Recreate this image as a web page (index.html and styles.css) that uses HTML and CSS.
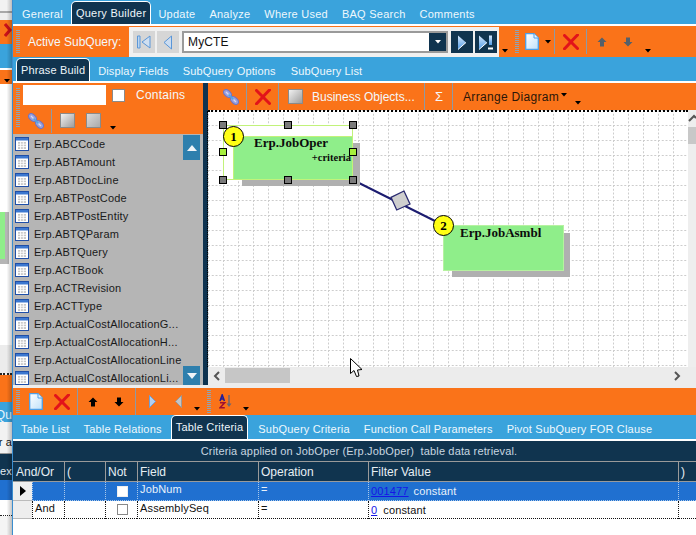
FILE: index.html
```html
<!DOCTYPE html>
<html lang="en">
<head>
<meta charset="utf-8">
<title>Query Builder</title>
<link rel="stylesheet" href="styles.css">
</head>
<body>
<svg class="defs" width="0" height="0" aria-hidden="true">
  <defs>
    <linearGradient id="gsq" x1="0" y1="0" x2="1" y2="1"><stop offset="0" stop-color="#f4f4f4"/><stop offset="1" stop-color="#9a9a9a"/></linearGradient>
    <linearGradient id="gsq2" x1="0" y1="0" x2="1" y2="1"><stop offset="0" stop-color="#dcdcdc"/><stop offset="1" stop-color="#a8a8a8"/></linearGradient>
    <linearGradient id="gdoc" x1="0" y1="0" x2="1" y2="1"><stop offset="0" stop-color="#ffffff"/><stop offset="1" stop-color="#bfe0fa"/></linearGradient>
    <linearGradient id="gtri" x1="0" y1="0" x2="0" y2="1"><stop offset="0" stop-color="#d6e8fb"/><stop offset="1" stop-color="#4f9be8"/></linearGradient>
    <symbol id="i-link" viewBox="0 0 16 16"><ellipse cx="4.500" cy="4.500" rx="4.600" ry="3" transform="rotate(45 4.500 4.500)" fill="#9aa0de" stroke="#6f76c4"/><ellipse cx="11.500" cy="11.500" rx="4.600" ry="3" transform="rotate(45 11.500 11.500)" fill="#9aa0de" stroke="#6f76c4"/><path d="M3 3 L6 6 M10 10 L13 13" stroke="#d6d9f4" stroke-width="1.300"/><path d="M5.500 5.500 L10.500 10.500" stroke="#4aa8e8" stroke-width="1.600"/></symbol>
    <symbol id="i-x" viewBox="0 0 16 16"><path d="M1.500 1.500 C6 6 10 10 14.500 14.500 M14.500 1 C10 5.500 6 10 1.500 14.800" fill="none" stroke="#e2131a" stroke-width="3" stroke-linecap="round"/></symbol>
    <symbol id="i-doc" viewBox="0 0 14 17"><path d="M.7 .7 H9 L13.300 5 V16.300 H.7 Z" fill="url(#gdoc)" stroke="#4f9fe6" stroke-width="1.300"/><path d="M9 .7 V5 H13.300" fill="#e8f4fe" stroke="#4f9fe6"/></symbol>
    <symbol id="i-sq" viewBox="0 0 15 15"><rect x=".5" y=".5" width="14" height="14" fill="url(#gsq)" stroke="#8a8a8a"/></symbol>
    <symbol id="i-sq2" viewBox="0 0 15 15"><rect x=".5" y=".5" width="14" height="14" fill="url(#gsq2)" stroke="#8a8a8a"/></symbol>
    <symbol id="i-drop" viewBox="0 0 6 4"><path d="M0 0 H6 L3 3.500 Z" fill="#000"/></symbol>
    <symbol id="i-up" viewBox="0 0 10 10"><path d="M5 .5 L9.500 5 H7 V9.500 H3 V5 H.5 Z"/></symbol>
    <symbol id="i-down" viewBox="0 0 10 10"><path d="M5 9.500 L9.500 5 H7 V.5 H3 V5 H.5 Z"/></symbol>
    <symbol id="i-first" viewBox="0 0 16 14"><path d="M1.500 1 H4 V13 H1.500 Z" fill="#bcd6f0" stroke="#5a96d8"/><path d="M14 1 L6 7 L14 13 Z" fill="#d0dff0" stroke="#5a96d8"/></symbol>
    <symbol id="i-prev" viewBox="0 0 10 15"><path d="M8.500 1 L1 7.500 L8.500 14 Z" fill="#cbdcf0" stroke="#5a96d8"/></symbol>
    <symbol id="i-next" viewBox="0 0 10 15"><path d="M1 .5 L9 7.500 L1 14.500 Z" fill="url(#gtri)"/><path d="M1 14.500 L9 7.500" stroke="#fff"/></symbol>
    <symbol id="i-last" viewBox="0 0 16 15"><path d="M1 .5 L9 7.500 L1 14.500 Z" fill="url(#gtri)"/><path d="M1 14.500 L9 7.500" stroke="#fff"/><path d="M11 .5 H14 V10 H11 Z" fill="url(#gtri)"/><path d="M10 13.500 H15" stroke="#fff" stroke-width="2"/></symbol>
    <symbol id="i-table" viewBox="0 0 14 14"><rect x=".5" y=".5" width="13" height="13" fill="#fff" stroke="#1f4fa8"/><rect x="1" y="1" width="12" height="2.500" fill="#3c78d0"/><path d="M3 5 H11 V12 H3 Z" fill="#c8c8c8"/><path d="M3 7.200 H11 M3 9.600 H11 M5.600 5 V12 M8.300 5 V12" stroke="#fff" stroke-width=".9"/></symbol>
    <symbol id="i-sort" viewBox="0 0 14 15"><path d="M1 7 L3.200 1 L5.400 7 M1.800 5 H4.600" fill="none" stroke="#1f1f9a" stroke-width="1.600"/><path d="M1 8.800 H5.600 L1 13.800 H5.800" fill="none" stroke="#a01030" stroke-width="1.600"/><path d="M10 1 V11" stroke="#667" stroke-width="1.400"/><path d="M7.500 9.500 H12.500 L10 13 Z" fill="#667"/></symbol>
  </defs>
</svg>

<aside class="backdrop">
  <div class="bd-white"></div>
  <div class="bd-line"></div>
  <div class="bd-light"></div>
  <div class="bd-orange"><svg class="bd-chev" width="8" height="14" viewBox="0 0 8 14"><path d="M1 1 L6 7 L1 13" fill="none" stroke="#c8101a" stroke-width="3"/></svg></div>
  <div class="bd-blue"></div>
  <div class="bd-gap"></div>
  <div class="bd-orange2"><svg class="bd-arrow" width="6" height="4"><use href="#i-drop"/></svg></div>
  <div class="bd-canvas"><div class="bd-shadow"><div class="bd-green"></div></div></div>
  <div class="bd-gray"></div>
  <div class="bd-orange3"></div>
  <div class="bd-blue2">Qu</div>
  <div class="bd-text">er a</div>
  <div class="bd-head">r ex</div>
  <div class="bd-sel"></div>
  <div class="bd-row"></div>
  <div class="bd-rest"></div>
</aside>

<main class="window">
  <nav class="tabs tabs-main">
    <span class="tab">General</span>
    <span class="tab active a-main">Query Builder</span>
    <span class="tab">Update</span>
    <span class="tab">Analyze</span>
    <span class="tab">Where Used</span>
    <span class="tab">BAQ Search</span>
    <span class="tab">Comments</span>
  </nav>

  <section class="toolbar tb-sub">
    <span class="grip g-a"></span>
    <span class="sub-label">Active SubQuery:</span>
    <div class="nav-panel">
      <button class="nb"><svg width="16" height="14"><use href="#i-first"/></svg></button>
      <button class="nb"><svg width="10" height="15"><use href="#i-prev"/></svg></button>
      <div class="combo"><span class="combo-text">MyCTE</span><span class="combo-btn"><svg width="6" height="4"><use href="#i-drop" class="w"/></svg></span></div>
      <button class="nb dark"><svg width="10" height="15"><use href="#i-next"/></svg></button>
      <button class="nb dark"><svg width="16" height="15"><use href="#i-last"/></svg></button>
    </div>
    <svg class="drop d-a" width="6" height="4"><use href="#i-drop"/></svg>
    <span class="grip g-b"></span>
    <svg class="ico doc-a" width="14" height="17"><use href="#i-doc"/></svg>
    <svg class="drop d-b" width="6" height="4"><use href="#i-drop"/></svg>
    <span class="sep s-a"></span>
    <svg class="ico x-a" width="16" height="16"><use href="#i-x"/></svg>
    <span class="sep s-b"></span>
    <svg class="ico gray up-a" width="10" height="10"><use href="#i-up"/></svg>
    <svg class="ico gray dn-a" width="10" height="10"><use href="#i-down"/></svg>
    <svg class="drop d-c" width="6" height="4"><use href="#i-drop"/></svg>
  </section>

  <nav class="tabs tabs-sub">
    <span class="tab active a-sub">Phrase Build</span>
    <span class="tab">Display Fields</span>
    <span class="tab">SubQuery Options</span>
    <span class="tab t-sl">SubQuery List</span>
  </nav>

  <section class="workspace">
    <div class="left">
      <div class="left-tools">
        <span class="grip g-left"></span>
        <div class="left-rows">
          <div class="search-row">
            <span class="search"></span>
            <span class="check"></span>
            <span class="contains">Contains</span>
          </div>
          <div class="left-btns">
            <svg class="ico link-l" width="16" height="16"><use href="#i-link"/></svg>
            <span class="sep s-l"></span>
            <svg class="ico sq-l" width="15" height="15"><use href="#i-sq"/></svg>
            <svg class="ico sq-l2" width="15" height="15"><use href="#i-sq2"/></svg>
            <svg class="drop d-l" width="6" height="4"><use href="#i-drop"/></svg>
          </div>
        </div>
      </div>
      <div class="list">
        <div class="row"><svg width="14" height="14"><use href="#i-table"/></svg><span>Erp.ABCCode</span></div>
        <div class="row"><svg width="14" height="14"><use href="#i-table"/></svg><span>Erp.ABTAmount</span></div>
        <div class="row"><svg width="14" height="14"><use href="#i-table"/></svg><span>Erp.ABTDocLine</span></div>
        <div class="row"><svg width="14" height="14"><use href="#i-table"/></svg><span>Erp.ABTPostCode</span></div>
        <div class="row"><svg width="14" height="14"><use href="#i-table"/></svg><span>Erp.ABTPostEntity</span></div>
        <div class="row"><svg width="14" height="14"><use href="#i-table"/></svg><span>Erp.ABTQParam</span></div>
        <div class="row"><svg width="14" height="14"><use href="#i-table"/></svg><span>Erp.ABTQuery</span></div>
        <div class="row"><svg width="14" height="14"><use href="#i-table"/></svg><span>Erp.ACTBook</span></div>
        <div class="row"><svg width="14" height="14"><use href="#i-table"/></svg><span>Erp.ACTRevision</span></div>
        <div class="row"><svg width="14" height="14"><use href="#i-table"/></svg><span>Erp.ACTType</span></div>
        <div class="row"><svg width="14" height="14"><use href="#i-table"/></svg><span>Erp.ActualCostAllocationG...</span></div>
        <div class="row"><svg width="14" height="14"><use href="#i-table"/></svg><span>Erp.ActualCostAllocationH...</span></div>
        <div class="row"><svg width="14" height="14"><use href="#i-table"/></svg><span>Erp.ActualCostAllocationLine</span></div>
        <div class="row"><svg width="14" height="14"><use href="#i-table"/></svg><span>Erp.ActualCostAllocationLi...</span></div>
        <span class="sb-btn sb-up"><svg width="10" height="6" viewBox="0 0 10 6"><path d="M5 0 L10 6 H0 Z" fill="#f0f4f8"/></svg></span>
        <span class="sb-btn sb-down"><svg width="10" height="6" viewBox="0 0 10 6"><path d="M5 6 L10 0 H0 Z" fill="#f0f4f8"/></svg></span>
      </div>
    </div>
    <div class="splitter"></div>
    <div class="right">
      <div class="toolbar tb-right">
        <svg class="ico link-r" width="16" height="16"><use href="#i-link"/></svg>
        <span class="sep s-r1"></span>
        <svg class="ico x-r" width="16" height="16"><use href="#i-x"/></svg>
        <span class="sep s-r2"></span>
        <svg class="ico sq-r" width="15" height="15"><use href="#i-sq"/></svg>
        <span class="bo">Business Objects...</span>
        <span class="sep s-r3"></span>
        <span class="sigma">&Sigma;</span>
        <span class="sep s-r4"></span>
        <span class="arrange">Arrange Diagram</span>
        <svg class="drop d-r1" width="6" height="4"><use href="#i-drop"/></svg>
        <svg class="drop d-r2" width="6" height="4"><use href="#i-drop"/></svg>
      </div>
      <div class="canvas-wrap">
        <div class="diagram">
          <svg class="grid" width="480" height="257">
            <defs>
              <pattern id="dots" width="15" height="15" patternUnits="userSpaceOnUse">
                <path d="M0 .5 H15 M.5 0 V15" stroke="#cdcdcd" stroke-dasharray="2 1.750" fill="none"/>
              </pattern>
            </defs>
            <rect width="480" height="257" fill="url(#dots)"/>
            <path d="M145 70 L235 115" stroke="#1c1c70" stroke-width="2"/>
            <path d="M196 81 L183 87.300 L188.700 100 L202 94 Z" fill="#cfcfcf" stroke="#2a2a70" stroke-width="1.300"/>
          </svg>

          <div class="sel-box"></div>
          <div class="shadow sh-1"></div>
          <div class="node n-1">
            <b class="n-title t-1">Erp.JobOper</b>
            <b class="n-sub">+criteria</b>
          </div>
          <span class="badge b-1">1</span>
          <i class="handle h-tl"></i><i class="handle h-tc"></i><i class="handle h-tr"></i>
          <i class="handle lime h-ml"></i><i class="handle lime h-mr"></i>
          <i class="handle h-bl"></i><i class="handle h-bc"></i><i class="handle h-br"></i>

          <div class="shadow sh-2"></div>
          <div class="node n-2"><b class="n-title t-2">Erp.JobAsmbl</b></div>
          <span class="badge b-2">2</span>

          <svg class="cursor" width="13" height="20" viewBox="0 0 13 20"><path d="M.5 .5 V15.500 L4 12.500 L6.500 18.500 L9 18 L7.500 12 L12 11.500 Z" fill="#fff" stroke="#000"/></svg>
        </div>
        <div class="vscroll">
          <svg class="v-arrow" width="8" height="8" viewBox="0 0 8 8"><path d="M1 7 L6 2 L8 4" fill="none" stroke="#555" stroke-width="2"/></svg>
          <span class="v-thumb"></span>
        </div>
      </div>
      <div class="hscroll">
        <svg width="7" height="10" viewBox="0 0 7 10"><path d="M6 1 L2 5 L6 9" fill="none" stroke="#555" stroke-width="2"/></svg>
        <span class="h-thumb"></span>
        <svg class="h-right" width="7" height="10" viewBox="0 0 7 10"><path d="M1 1 L5 5 L1 9" fill="none" stroke="#555" stroke-width="2"/></svg>
      </div>
    </div>
  </section>

  <section class="toolbar tb-bottom">
    <span class="grip g-bot"></span>
    <svg class="ico doc-b" width="14" height="17"><use href="#i-doc"/></svg>
    <svg class="ico x-b" width="16" height="16"><use href="#i-x"/></svg>
    <span class="sep s-b1"></span>
    <svg class="ico up-b" width="10" height="10"><use href="#i-up"/></svg>
    <svg class="ico dn-b" width="10" height="10"><use href="#i-down"/></svg>
    <span class="sep s-b2"></span>
    <svg class="ico nx-b" width="7" height="13" viewBox="0 0 7 13"><path d="M.5 .5 L6.500 6.500 L.5 12.500 Z" fill="#b4d0ee" stroke="#6d9ed8"/></svg>
    <svg class="ico pv-b" width="7" height="13" viewBox="0 0 7 13"><path d="M6.500 .5 L.5 6.500 L6.500 12.500 Z" fill="#c4c4c4" stroke="#9a9a9a"/></svg>
    <svg class="drop d-b1" width="6" height="4"><use href="#i-drop"/></svg>
    <span class="grip g-bot2"></span>
    <svg class="ico sort" width="14" height="15"><use href="#i-sort"/></svg>
    <svg class="drop d-b2" width="6" height="4"><use href="#i-drop"/></svg>
  </section>

  <nav class="tabs tabs-crit">
    <span class="tab">Table List</span>
    <span class="tab">Table Relations</span>
    <span class="tab active a-crit">Table Criteria</span>
    <span class="tab">SubQuery Criteria</span>
    <span class="tab">Function Call Parameters</span>
    <span class="tab">Pivot SubQuery FOR Clause</span>
  </nav>

  <section class="criteria">
    <div class="caption">Criteria applied on JobOper (Erp.JobOper)&nbsp; table data retrieval.</div>
    <div class="gt">
      <div class="th th-first">And/Or</div><div class="th">(</div><div class="th">Not</div><div class="th">Field</div><div class="th">Operation</div><div class="th">Filter Value</div><div class="th">)</div>

      <div class="td sel rowsel"><svg width="6" height="10" viewBox="0 0 6 10"><path d="M0 0 L6 5 L0 10 Z" fill="#000"/></svg></div>
      <div class="td on"></div><div class="td on"></div>
      <div class="td on cchk"><span class="gchk gchk-on"></span></div>
      <div class="td on up">JobNum</div><div class="td on up">=</div>
      <div class="td on"><a class="lnk" href="#">001477</a><span class="const">constant</span></div>
      <div class="td on"></div>

      <div class="td rowsel"></div>
      <div class="td up">And</div><div class="td"></div>
      <div class="td cchk"><span class="gchk"></span></div>
      <div class="td up">AssemblySeq</div><div class="td up">=</div>
      <div class="td"><a class="lnk" href="#">0</a><span class="const c-2">constant</span></div>
      <div class="td"></div>
    </div>
  </section>
</main>
</body>
</html>
```

FILE: styles.css
```css
* { box-sizing: border-box; }
html, body { margin: 0; padding: 0; }
body {
  width: 696px; height: 535px; overflow: hidden;
  display: flex; background: #fff;
  font: 11px "Liberation Sans", Arial, sans-serif;
  letter-spacing: .15px;
}
.defs { position: absolute; }
svg { display: block; flex: none; }
button { border: 0; padding: 0; margin: 0; }

/* window behind */
.backdrop { width: 12px; height: 535px; flex: none; overflow: hidden; position: relative; display: flex; flex-direction: column; background: #eee; }
.backdrop::after { content: ""; position: absolute; inset: 0; background: linear-gradient(to right, rgba(0,0,0,0) 55%, rgba(0,0,0,.22)); pointer-events: none; }
.bd-white { height: 11px; background: #f2f2f2; flex: none; }
.bd-line { height: 2px; background: #a8a8a8; flex: none; }
.bd-light { height: 7px; background: #eee; flex: none; }
.bd-orange { height: 24px; background: #fa7319; padding: 3px 0 0 4px; flex: none; }
.bd-blue { height: 24px; background: #3aa3dc; flex: none; }
.bd-gap { height: 2px; background: #fff; flex: none; }
.bd-orange2 { height: 14px; background: #fa7319; padding: 9px 0 0 4px; flex: none; }
.bd-canvas { height: 261px; background: #fff; padding-top: 128px; flex: none; }
.bd-shadow { width: 9px; height: 52px; background: #b5b5b5; }
.bd-green { width: 5px; height: 47px; background: #8fee8a; }
.bd-gray { height: 30px; background: #ececec; border-bottom: 2px dotted #222; flex: none; }
.bd-orange3 { height: 27px; background: #fa7319; flex: none; }
.bd-blue2, .bd-text, .bd-head { display: flex; justify-content: flex-end; white-space: nowrap; align-items: center; overflow: hidden; flex: none; }
.bd-blue2 { height: 20px; background: #3aa3dc; color: #e8f5fc; font-size: 12px; align-items: flex-end; }
.bd-text { height: 32px; background: #f2f2f2; border-bottom: 1px solid #999; color: #111; padding-top: 8px; }
.bd-head { height: 26px; background: #10344f; color: #e6eef3; padding-top: 8px; }
.bd-sel { height: 20px; background: #2070d0; flex: none; }
.bd-row { height: 16px; background: #fff; border-bottom: 1px dotted #222; flex: none; }
.bd-rest { flex: 1; background: #f4f4f4; }

/* main window */
.window { flex: 1; min-width: 0; height: 535px; border-left: 1px solid #3a8dcf; display: flex; flex-direction: column; background: #fff; }
.tabs { display: flex; align-items: flex-end; background: #3aa3dc; color: #eef8fd; flex: none; }
.tab { padding: 0 7px; white-space: nowrap; height: 24px; line-height: 28px; }
.tab.active { background: #10344f; border: 1px solid #fff; border-bottom: 0; border-radius: 5px 5px 0 0; color: #eef6fa; padding: 0 4px; line-height: 22px; }
.tabs-main { height: 24px; padding-left: 2px; margin-bottom: 2px; letter-spacing: .25px; }
.tabs-main .tab.active { margin: 0 0 0 1px; height: 23px; }
.tabs-sub { height: 24px; padding-left: 3px; margin-bottom: 2px; }
.a-sub { margin-right: 1px; }
.tabs-sub .tab.active { height: 23px; }
.t-sl { padding-left: 8px; }
.tabs-crit { height: 24px; margin-bottom: 2px; padding-left: 1px; letter-spacing: .2px; }
.tabs-crit .tab.active { margin: 0 3px 0 2px; height: 24px; }

.toolbar { display: flex; align-items: center; background: #fa7319; flex: none; position: relative; }
.grip { width: 4px; flex: none; background: repeating-linear-gradient(to bottom, #8fa3b3 0 1px, transparent 1px 2px); }
.sep { width: 1px; flex: none; background: #8d9aa5; }
.drop { flex: none; }

.tb-sub { height: 31px; }
.g-a { height: 23px; margin-left: 3px; }
.sub-label { color: #f4f8fb; font-size: 12px; margin-left: 8px; letter-spacing: 0; white-space: nowrap; width: 101px; }
.nav-panel { display: flex; align-items: center; gap: 2px; height: 30px; margin-top: 1px; width: 370px; background: #f0f0f0; padding: 0 3px 0 4px; }
.nb { width: 22px; height: 22px; background: #d6d6d6; display: flex; align-items: center; justify-content: center; flex: none; }
.nb.dark { background: #10344f; }
.combo { width: 266px; height: 22px; margin: 0 1px; background: #fff; border: 2px solid #9a9a9a; display: flex; align-items: center; justify-content: space-between; flex: none; }
.combo-text { color: #111; font-size: 12px; padding-left: 4px; }
.combo-btn { width: 17px; height: 18px; background: #10344f; display: flex; align-items: center; justify-content: center; }
.w { filter: invert(1); }
.d-a { margin: 18px 0 0 3px; }
.g-b { margin-left: 7px; height: 23px; }
.doc-a { margin-left: 6px; }
.d-b { margin: 0 0 0 6px; }
.s-a { margin-left: 3px; height: 25px; }
.x-a { margin-left: 8px; }
.s-b { margin-left: 7px; height: 25px; }
.gray { fill: #55606a; }
.up-a { margin-left: 10px; }
.dn-a { margin-left: 16px; }
.d-c { margin: 18px 0 0 12px; }

.workspace { display: flex; height: 305px; background: #eee; flex: none; }
.left { width: 190px; flex: none; display: flex; flex-direction: column; height: 302px; }
.left-tools { height: 51px; flex: none; background: #fa7319; display: flex; }
.g-left { height: 40px; margin: 5px 0 0 3px; }
.left-rows { flex: 1; }
.search-row { display: flex; align-items: center; height: 24px; padding-left: 3px; }
.search { width: 83px; height: 20px; background: #fff; }
.check { width: 13px; height: 13px; margin-left: 6px; background: #fff; border: 1px solid #8a8a8a; }
.contains { color: #f4f8fb; margin-left: 11px; font-size: 12px; letter-spacing: .25px; }
.left-btns { display: flex; align-items: center; height: 27px; }
.link-l { margin-left: 8px; }
.s-l { height: 24px; margin-left: 7px; }
.sq-l { margin-left: 8px; }
.sq-l2 { margin-left: 11px; }
.d-l { margin: 15px 0 0 9px; }

.list { flex: 1; background: #b5b5b5; overflow: hidden; position: relative; padding-top: 1px; color: #1a1a1a; letter-spacing: .2px; }
.row { height: 18px; display: flex; align-items: center; gap: 5px; padding-left: 2px; white-space: nowrap; }
.sb-btn { position: absolute; left: 170px; width: 17px; background: #2e7fad; display: flex; align-items: center; justify-content: center; }
.sb-up { top: 1px; height: 25px; }
.sb-down { bottom: 0; height: 19px; }

.splitter { width: 5px; height: 302px; flex: none; background: #0e3350; }
.right { flex: 1; min-width: 0; display: flex; flex-direction: column; }
.tb-right { height: 27px; color: #f4f8fb; font-size: 12px; letter-spacing: 0; }
.tb-right .sep { height: 27px; }
.link-r { margin-left: 15px; }
.s-r1 { margin-left: 7px; }
.x-r { margin-left: 8px; }
.s-r2 { margin-left: 7px; }
.sq-r { margin-left: 9px; }
.bo { margin-left: 9px; width: 112px; white-space: nowrap; }
.sigma { margin-left: 10px; width: 17px; font-size: 13px; }
.arrange { margin-left: 10px; color: #2a1608; white-space: nowrap; width: 98px; letter-spacing: .32px; }
.d-r1 { margin: -4px 0 0 0; }
.d-r2 { margin: 12px 0 0 8px; }

.canvas-wrap { flex: 1; display: flex; min-height: 0; }
.diagram { width: 480px; height: 257px; flex: none; position: relative; background: #fff; border-top: 1px solid #fff; }
.diagram::before { content: ""; position: absolute; left: -1px; top: 0; bottom: 0; border-left: 1px dotted #000; }
.diagram::after { content: ""; position: absolute; left: 0; right: 0; top: -1px; border-top: 2px dotted #000; }
.grid { position: absolute; left: 0; top: -1px; }
.sel-box { position: absolute; left: 15px; top: 14px; width: 130px; height: 55px; border: 1px solid #c2f27a; background: #fff; }
.shadow { position: absolute; background: #b0b0b0; }
.sh-1 { left: 34px; top: 32px; width: 118px; height: 43px; }
.node { position: absolute; background: #8fee8a; border: 1px solid #b6f2a0; font-family: "Liberation Serif", "Times New Roman", serif; color: #0c0c0c; letter-spacing: 0; }
.n-1 { left: 25px; top: 25px; width: 120px; height: 44px; border-color: #c2f27a; }
.n-2 { left: 235px; top: 114px; width: 121px; height: 46px; }
.sh-2 { left: 244px; top: 122px; width: 118px; height: 44px; }
.n-title { position: absolute; font-size: 13px; line-height: 14px; white-space: nowrap; }
.t-1 { left: 20px; top: -1px; }
.t-2 { left: 16px; top: 0; }
.n-sub { position: absolute; right: 1px; top: 15px; font-size: 10.5px; line-height: 12px; white-space: nowrap; }
.badge { position: absolute; width: 21px; height: 21px; border-radius: 50%; background: #ffff14; border: 1px solid #000; font: bold 13px/19px "Liberation Serif", serif; letter-spacing: 0; text-align: center; color: #000; }
.b-1 { left: 15px; top: 15px; }
.b-2 { left: 225px; top: 104px; }
.handle { position: absolute; width: 8px; height: 8px; background: #7a7a7a; border: 1px solid #000; }
.handle.lime { background: #a6f03c; }
.h-tl { left: 11px; top: 10px; } .h-tc { left: 76px; top: 10px; } .h-tr { left: 141px; top: 10px; }
.h-ml { left: 11px; top: 37px; } .h-mr { left: 141px; top: 37px; }
.h-bl { left: 11px; top: 65px; } .h-bc { left: 76px; top: 65px; } .h-br { left: 141px; top: 65px; }
.cursor { position: absolute; left: 142px; top: 247px; }

.vscroll { flex: 1; background: #eee; position: relative; padding-top: 4px; }
.v-arrow { margin-bottom: 5px; }
.v-thumb { display: block; height: 17px; background: #c8c8c8; }
.hscroll { height: 21px; flex: none; background: #ececec; display: flex; align-items: flex-start; padding: 3px 0 0 5px; }
.hscroll svg { margin-top: 1px; }
.h-thumb { width: 65px; height: 15px; margin: -2px 0 0 5px; background: #c6c6c6; }
.hscroll .h-right { margin-left: auto; margin-right: 15px; }

.tb-bottom { height: 27px; }
.g-bot { height: 23px; margin-left: 3px; }
.doc-b { margin-left: 9px; }
.x-b { margin-left: 11px; }
.s-b1 { height: 27px; margin-left: 7px; }
.up-b { margin-left: 10px; fill: #000; }
.dn-b { margin-left: 16px; fill: #000; }
.s-b2 { height: 27px; margin-left: 11px; }
.nx-b { margin-left: 13px; }
.pv-b { margin-left: 19px; }
.d-b1 { margin: 14px 0 0 12px; }
.g-bot2 { height: 23px; margin-left: 7px; }
.sort { margin-left: 8px; }
.d-b2 { margin: 14px 0 0 10px; }

.criteria { flex: 1; min-height: 0; background: #fff; }
.caption { height: 20px; background: #10344f; color: #c8d6e0; text-align: center; line-height: 21px; padding-left: 9px; }
.gt { display: grid; grid-template-columns: 19px 32px 41px 32px 121px 110px 310px 18px; grid-template-rows: 21px 19px 18px; }
.th { background: #10344f; color: #e6eef3; border-left: 1px solid #9a9a9a; border-top: 1px solid #9a9a9a; border-bottom: 1px solid #9a9a9a; line-height: 20px; padding-left: 2px; font-size: 12px; letter-spacing: 0; }
.th-first { grid-column: span 2; border-left: 0; padding-left: 3px; }
.td { background: #fff; border-left: 1px dotted #111; border-bottom: 1px dotted #111; padding-left: 2px; color: #111; line-height: 18px; white-space: nowrap; overflow: hidden; }
.td.on { background: #2070d0; color: #e8f2fb; border-color: #a9c8ea; }
.up { line-height: 14px; }
.rowsel { background: #eee; border-left: 0; border-bottom: 1px solid #bbb; display: flex; align-items: center; padding-left: 7px; }
.cchk { display: flex; align-items: center; justify-content: center; }
.gchk { width: 11px; height: 11px; background: #fff; border: 1px solid #888; }
.gchk-on { border-color: #eee; }
.lnk { color: #1414e6; text-decoration: underline; }
.const { margin-left: 5px; }
.c-2 { margin-left: 6px; }
```
